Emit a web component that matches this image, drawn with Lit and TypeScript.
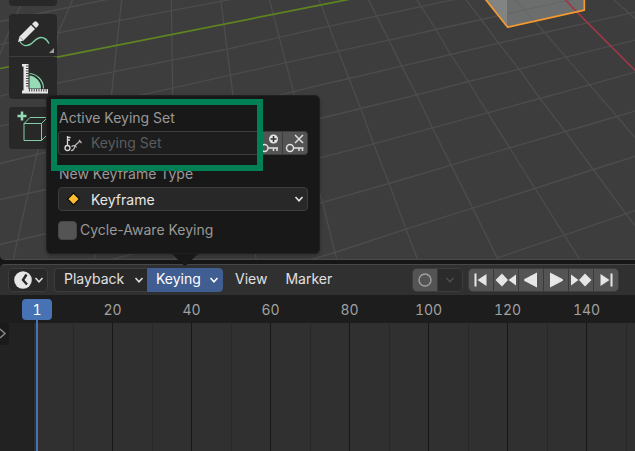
import { LitElement, html, css, svg } from "lit";
import { customElement, state } from "lit/decorators.js";

const chevron = html`<svg class="chevron" width="10" height="8" viewBox="0 0 10 8" aria-hidden="true">
  <path d="M1.5 2 5 5.8 8.5 2" fill="none" stroke="currentColor" stroke-width="1.5" />
</svg>`;

const ROWS = [
  "0,66 175,30 320,0",
  "0,135 175,100 365,62 665,5 690,0",
  "0,290 175,250 380,209 690,147 960,86 1130,50 1270,20 1397,-7",
  "0,380 520,265 960,167 1015,155 1167,122 1308,90 1444,60 1754,-8",
  "0,492 960,257 1047,237 1205,200 1352,165 1496,131 1634,99 1762,70 1905,38",
  "0,600 138,570 960,357 1082,327 1250,286 1405,246 1557,209 1698,173 1905,122",
  "0,735 138,702 960,475 1121,433 1297,385 1463,340 1620,297 1769,256 1905,218",
  "300,790 960,611 1167,552 1353,497 1529,445 1696,396 1851,351 1905,335",
  "740,840 960,772 1005,759 1218,689 1418,626 1605,567 1780,510 1905,471",
  "1490,776 1693,707 1878,643 1905,633",
];
const COLUMNS = [
  "70,0 25,100 0,165",
  "218,0 175,100 115,445 40,778",
  "365,0 335,280 283,778",
  "514,0 518,280 525,778",
  "662,0 698,280 768,778",
  "808,0 880,275 960,585 968,611 1005,759 1010,778",
  "956,0 963,15 1015,155 1047,237 1082,327 1121,433 1167,552 1218,689 1252,778",
  "1105,0 1130,50 1167,122 1205,200 1250,286 1297,385 1353,497 1418,626 1493,778",
  "1250,0 1308,90 1352,165 1405,246 1463,340 1529,445 1605,567 1693,707 1738,778",
  "1397,0 1444,60 1496,131 1557,209 1620,297 1696,396 1780,510 1878,643 1905,678",
  "1545,0 1634,99 1698,173 1769,256 1851,351 1905,414",
  "1840,0 1905,57",
];

/** 3D viewport floor grid, axes and the selected cube. */
@customElement("viewport-scene")
export class ViewportScene extends LitElement {
  static styles = css`
    :host { display: block; }
    .scene { display: block; width: 100%; height: 100%; }
    .grid { fill: none; stroke: #4c4c4c; stroke-width: 4; }
    .axis-y { fill: none; stroke: #5d8420; stroke-width: 5; }
    .axis-x { fill: none; stroke: #9c3849; stroke-width: 5; }
    .side { fill: #818483; }
    .front { fill: #6c6e6d; }
    .seen { fill: none; stroke: #646665; stroke-width: 3; }
    .outline { fill: none; stroke: #f69a2e; stroke-width: 5; stroke-linejoin: round; }
  `;
  render() {
    return html`<svg class="scene" viewBox="0 0 1905 780" preserveAspectRatio="xMidYMid slice" aria-hidden="true">
      ${[...ROWS, ...COLUMNS].map((p) => svg`<polyline class="grid" points=${p} />`)}
      <polyline class="axis-y" points="0,207 175,172 990,11 1050,-1" />
      <path class="side" d="M1456 0h65v83z" />
      <path class="front" d="M1521 0h232v32l-232 51z" />
      <path class="seen" d="M1545 0l59 66M1521 43l195-43" />
      <polyline class="axis-x" points="1695,0 1725,32 1905,213" />
      <polyline class="outline" points="1456,-1 1523,83 1753,32 1753,-1" />
    </svg>`;
  }
}

/** Left-hand tool shelf. */
@customElement("tool-shelf")
export class ToolShelf extends LitElement {
  static styles = css`
    :host { display: flex; flex-direction: column; gap: 8px; width: 48px; }
    .stub { height: 6px; background: #282828; border-radius: 0 0 4px 4px; }
    .group { display: flex; flex-direction: column; gap: 1px; border-radius: 4px; overflow: hidden; }
    .tool { display: block; width: 48px; height: 42px; padding: 0; border: 0; background: #282828; }
    .tool svg { display: block; }
  `;
  render() {
    const ticks = [0, 1, 2, 3, 4, 5, 6, 7, 8];
    return html`
      <div class="stub"></div>
      <div class="group">
        <button class="tool" aria-label="Annotate">
          <svg width="48" height="42" viewBox="0 0 48 42">
            <path d="M11 27.500c2 4 6 5 10 3s6-7 11-7c4 0 6 2 8 6" fill="none" stroke="#7fcfa6" stroke-width="1.500" />
            <path d="M9 28l1.500-5.500L22 11l4 4-11.500 11.500z" fill="#e6e6e6" />
            <path d="M23 10l2-2q1.500-1.500 3 0l1 1q1.500 1.500 0 3l-2 2z" fill="#e6e6e6" />
            <path d="M10.500 23l4 3.500" stroke="#999" stroke-width="1" />
            <path d="M45 34v5h-5z" fill="#a0a0a0" />
          </svg>
        </button>
        <button class="tool" aria-label="Measure">
          <svg width="48" height="42" viewBox="0 0 48 42">
            <path d="M20.500 16.500A15 15 0 0 1 34.500 31.500" fill="none" stroke="#7fcfa6" stroke-width="1.200" />
            <path d="M20.500 18.500A13 13 0 0 1 32 31.500H20.500z" fill="#96dbb5" />
            <path d="M13 7h6.500v25H39v4.500H13z" fill="#e6e6e6" />
            ${ticks.map((i) => svg`<path d=${`M17 ${9 + i * 2.5}h3`} stroke="#444" stroke-width="1" />`)}
            ${ticks.slice(1).map((i) => svg`<path d=${`M${18 + i * 2.4} 32v2.500`} stroke="#444" stroke-width="1" />`)}
            <path d="M12.500 9.500h2v24h-2z" fill="#282828" />
          </svg>
        </button>
      </div>
      <div class="group">
        <button class="tool" aria-label="Add Cube">
          <svg width="48" height="42" viewBox="0 0 48 42">
            <path d="M13 4.500v9M8.500 9h9" stroke="#96dbb5" stroke-width="2.500" />
            <path d="M15 16.500h17.500v17H15zM15 16.500l6-6h17.500l-6 6M38.500 10.500v17l-6 6" fill="none" stroke="#84cda6" stroke-width="1" />
          </svg>
        </button>
      </div>
    `;
  }
}

/** Popover with the keying options. */
@customElement("keying-popover")
export class KeyingPopover extends LitElement {
  static styles = css`
    :host { display: block; position: relative; width: 274px; color: #989898; font: 14px/24px Inter, sans-serif; }
    .panel {
      display: flex; flex-direction: column; gap: 7px; padding: 10px 11px 11px;
      background: #181818; border: 1px solid #202020; border-radius: 5px;
      box-shadow: 0 2px 4px #0004;
    }
    .field { display: flex; flex-direction: column; gap: 1px; }
    .name { padding-left: 1px; }
    .row { display: flex; height: 24px; }
    .box {
      display: flex; align-items: center; flex: 1; min-width: 0; box-sizing: border-box; height: 24px;
      border: 1px solid #3d3d3d; border-radius: 4px; background: #1d1d1d; position: relative;
    }
    .row .box { border-right: 0; border-radius: 4px 0 0 4px; }
    .box svg { flex: none; }
    .text {
      flex: 1; min-width: 0; height: 22px; padding: 0; border: 0; outline: 0; background: none;
      font: inherit; color: #e6e6e6;
    }
    .text::placeholder { color: #5c5c5c; opacity: 1; }
    .act { width: 25px; height: 24px; padding: 0; border: 1px solid #3d3d3d; border-left: 0; background: #545454; }
    .act:last-child { border-radius: 0 4px 4px 0; }
    .act svg { display: block; }
    .drop { background: #282828; color: #e6e6e6; }
    .pick {
      flex: 1; height: 22px; padding: 0; border: 0; outline: 0; background: none; appearance: none;
      font: inherit; color: inherit;
    }
    .drop .chevron { margin-right: 3px; }
    .check { display: flex; align-items: center; gap: 3px; height: 24px; }
    .tick {
      appearance: none; width: 19px; height: 19px; margin: 0; border: 1px solid #474747;
      border-radius: 4px; background: #545454;
    }
    .tick:checked { background: #4772b3; }
    .arrow { position: absolute; top: 100%; left: 126px; display: block; }
    .mark {
      position: absolute; left: 5px; top: 4px; width: 212px; height: 72px; box-sizing: border-box;
      border: 6px solid #008054; pointer-events: none;
    }
  `;
  render() {
    return html`
      <div class="panel">
        <div class="field">
          <label class="name" for="set">Active Keying Set</label>
          <div class="row">
            <div class="box">
              <svg width="32" height="22" viewBox="0 0 32 22" aria-hidden="true">
                <g fill="none" stroke="#d8d8d8" stroke-width="1.300">
                  <circle cx="8.500" cy="16" r="2.500" /><path d="M8.500 13.500V4M8.500 5.500h3M8.500 8h2.500" />
                </g>
                <path d="M12 18.500c4 .5 3-4 4.500-5.500l4-3.500M20 8l2.500 3M12.500 14.500c2-1.500 4-1 5 1" fill="none" stroke="#b8b8b8" stroke-width="1.200" />
              </svg>
              <input id="set" class="text" type="text" placeholder="Keying Set" />
            </div>
            <button class="act" aria-label="Add keying set">
              <svg width="24" height="22" viewBox="0 0 24 22">
                <g fill="none" stroke="#e0e0e0" stroke-width="1.500">
                  <circle cx="6.500" cy="16" r="3.500" /><path d="M10 16h10M15.500 16v3M19 16v3" />
                </g>
                <circle cx="15.500" cy="7" r="4.500" fill="#e6e6e6" />
                <path d="M15.500 4v6M12.500 7h6" stroke="#333" stroke-width="1.500" />
              </svg>
            </button>
            <button class="act" aria-label="Remove keying set">
              <svg width="24" height="22" viewBox="0 0 24 22">
                <g fill="none" stroke="#e0e0e0" stroke-width="1.500">
                  <circle cx="7" cy="16" r="3.500" /><path d="M10.500 16h10M16 16v3M19.500 16v3" />
                  <path d="M12 3l8 8M20 3l-8 8" />
                </g>
              </svg>
            </button>
          </div>
        </div>
        <div class="field">
          <label class="name" for="type">New Keyframe Type</label>
          <div class="box drop">
            <svg width="32" height="22" viewBox="0 0 32 22" aria-hidden="true">
              <path d="M14.500 5l6 6-6 6-6-6z" fill="#ffbe32" stroke="#0c0c0c" stroke-width="1.200" />
            </svg>
            <select id="type" class="pick"><option>Keyframe</option></select>
            ${chevron}
          </div>
        </div>
        <label class="check"><input class="tick" type="checkbox" />Cycle-Aware Keying</label>
      </div>
      <svg class="arrow" width="26" height="12" viewBox="0 0 26 12" aria-hidden="true">
        <path d="M0-2h26v2L14.500 11q-1.500 1-3 0L0 0z" fill="#181818" />
      </svg>
      <div class="mark"></div>
    `;
  }
}

const RULER_START = 73;
const CELL = 79;

/** Timeline header, ruler and channel area. */
@customElement("timeline-editor")
export class TimelineEditor extends LitElement {
  @state() private frame = 1;
  @state() private span = window.innerWidth;
  private resized = () => {
    this.span = window.innerWidth;
  };

  static styles = css`
    :host { display: block; font: 14px/24px Inter, sans-serif; color: #e0e0e0; }
    button { font: inherit; color: inherit; padding: 0; margin: 0; }
    .header {
      display: flex; align-items: center; box-sizing: border-box; height: 31px; padding: 0 16px 0 8px;
      background: #303030; border-top: 1px solid #474747; border-radius: 5px 0 0 0;
    }
    .editor {
      display: flex; align-items: center; justify-content: space-between; box-sizing: border-box;
      width: 40px; height: 24px; padding: 0 3px 0 5px; margin-right: 6px;
      border: 1px solid #3d3d3d; border-radius: 4px; background: #282828;
    }
    .menus { display: flex; }
    .anchor { position: relative; }
    .popover { position: absolute; left: -101px; bottom: calc(100% + 14px); z-index: 2; }
    .menu {
      display: flex; align-items: flex-start; justify-content: space-between; box-sizing: border-box; height: 24px;
      border: 1px solid #3d3d3d; background: #282828; padding: 0 3px 0 9px; line-height: 20px;
    }
    .menu .chevron { align-self: center; }
    .menu.playback { width: 93px; border-radius: 4px 0 0 4px; border-right: 0; }
    .menu.keying { width: 76px; padding-left: 8px; background: #405e91; border-color: #405e91; border-radius: 0 4px 4px 0; color: #fff; }
    .plain { border: 0; background: none; height: 24px; line-height: 22px; padding-bottom: 2px; }
    .plain.view { margin: 0 18px 0 12px; }
    .side { display: flex; gap: 5px; margin-left: auto; }
    .bar { display: flex; gap: 1px; border: 1px solid #3d3d3d; border-radius: 5px; overflow: hidden; background: #3a3a3a; }
    .key { display: block; width: 24px; height: 22px; border: 0; background: #545454; }
    .key svg { display: block; margin: 0 auto; }
    .key.off { background: #2b2b2b; color: #4d4d4d; }
    .body { position: relative; overflow: hidden; background: #303030; }
    .ruler { display: flex; height: 28px; padding-left: 73px; background: #1d1d1d; color: #a0a0a0; }
    .cell { flex: none; width: 79px; padding-top: 3px; box-sizing: border-box; text-align: center; font-variant-numeric: tabular-nums; }
    .tracks { display: flex; height: 128px; }
    .before { flex: none; width: 33px; margin-right: 39px; background: #222222; border-right: 1px solid #1d1d1d; }
    .lane { flex: none; box-sizing: border-box; width: 79px; padding-left: 38px; border-left: 1px solid #282828; }
    .line { width: 1px; height: 100%; background: #171717; }
    .playhead { position: absolute; top: 4px; bottom: 0; left: 22px; display: flex; flex-direction: column; align-items: center; width: 30px; }
    .now { width: 30px; height: 21px; line-height: 21px; border-radius: 4px; background: #4772b3; color: #fff; text-align: center; font-variant-numeric: tabular-nums; }
    .stem { flex: 1; width: 2px; background: #4772b3; }
    .expand { position: absolute; left: 0; top: 28px; width: 9px; height: 22px; border: 0; background: #1a1a1a; border-radius: 0 4px 4px 0; color: #8a8a8a; }
    .expand svg { display: block; }
  `;

  connectedCallback() {
    super.connectedCallback();
    window.addEventListener("resize", this.resized);
  }

  disconnectedCallback() {
    window.removeEventListener("resize", this.resized);
    super.disconnectedCallback();
  }

  private go(frame: number) {
    this.frame = frame;
  }

  render() {
    const whole = Math.max(1, Math.floor((this.span - RULER_START) / CELL));
    const frames = Array.from({ length: whole }, (_, i) => (i + 1) * 20);
    const lanes = [...frames, (whole + 1) * 20];
    const keys: [string, string, number][] = [
      ["Jump to start", "M5.500 4.500h2v13h-2zM17.500 5v12L8.500 11z", 1],
      ["Previous keyframe", "M8 4.500l6 6.500-6 6.500L1.500 11zM22 5.500v11L14.500 11z", 1],
      ["Play backwards", "M18 3.500v15L5.500 12q-1-1 0-2z", 1],
      ["Play", "M6 3.500v15L18.500 12q1-1 0-2z", 1],
      ["Next keyframe", "M16 4.500l6.500 6.500-6.500 6.500L10 11zM2 5.500v11L9.500 11z", 1],
      ["Jump to end", "M16.500 4.500h2v13h-2zM6.500 5v12L15.500 11z", 1],
    ];
    return html`
      <div class="header">
        <button class="editor" aria-label="Editor type">
          <svg width="18" height="18" viewBox="0 0 18 18">
            <circle cx="9" cy="9" r="8.800" fill="#e6e6e6" />
            <path d="M12.500 3.500L9 9l4 4.500" fill="none" stroke="#282828" stroke-width="2.400" />
          </svg>
          ${chevron}
        </button>
        <div class="menus">
          <button class="menu playback">Playback ${chevron}</button>
          <div class="anchor">
            <button class="menu keying" aria-expanded="true">Keying ${chevron}</button>
            <keying-popover class="popover"></keying-popover>
          </div>
        </div>
        <button class="plain view">View</button>
        <button class="plain">Marker</button>
        <div class="side">
          <div class="bar">
            <button class="key" aria-label="Auto keying">
              <svg width="22" height="22" viewBox="0 0 22 22"><circle cx="11" cy="11" r="6" fill="none" stroke="#a0a0a0" stroke-width="1.400" /></svg>
            </button>
            <button class="key off" aria-label="Auto keying options">${chevron}</button>
          </div>
          <div class="bar">
            ${keys.map(
              ([label, d, frame]) => html`<button class="key" aria-label=${label} @click=${() => this.go(frame)}>
                <svg width="24" height="22" viewBox="0 0 24 22"><path d=${d} fill="#e6e6e6" /></svg>
              </button>`
            )}
          </div>
        </div>
      </div>
      <div class="body">
        <div class="ruler">${frames.map((f) => html`<div class="cell">${f}</div>`)}</div>
        <div class="tracks">
          <div class="before"></div>
          ${lanes.map(() => html`<div class="lane"><div class="line"></div></div>`)}
        </div>
        <div class="playhead"><div class="now">${this.frame}</div><div class="stem"></div></div>
        <button class="expand" aria-label="Show channels">
          <svg width="9" height="22" viewBox="0 0 9 22"><path d="M0 6l5 4.500L0 15" fill="none" stroke="currentColor" stroke-width="1.500" /></svg>
        </button>
      </div>
    `;
  }
}

@customElement("app-root")
export class AppRoot extends LitElement {
  static styles = css`
    :host { display: flex; flex-direction: column; gap: 4px; min-height: 100vh; background: #161616; overflow: hidden; }
    .viewport {
      flex: 1; position: relative; display: flex; box-sizing: border-box; min-height: 200px; padding-left: 9px;
      overflow: hidden; background: #3d3d3d; border-bottom: 1px solid #4b4b4b; border-radius: 0 0 0 5px;
    }
    .scene { position: absolute; inset: 0; }
    .shelf { position: relative; }
  `;
  render() {
    return html`
      <div class="viewport">
        <viewport-scene class="scene"></viewport-scene>
        <tool-shelf class="shelf"></tool-shelf>
      </div>
      <timeline-editor></timeline-editor>
    `;
  }
}
